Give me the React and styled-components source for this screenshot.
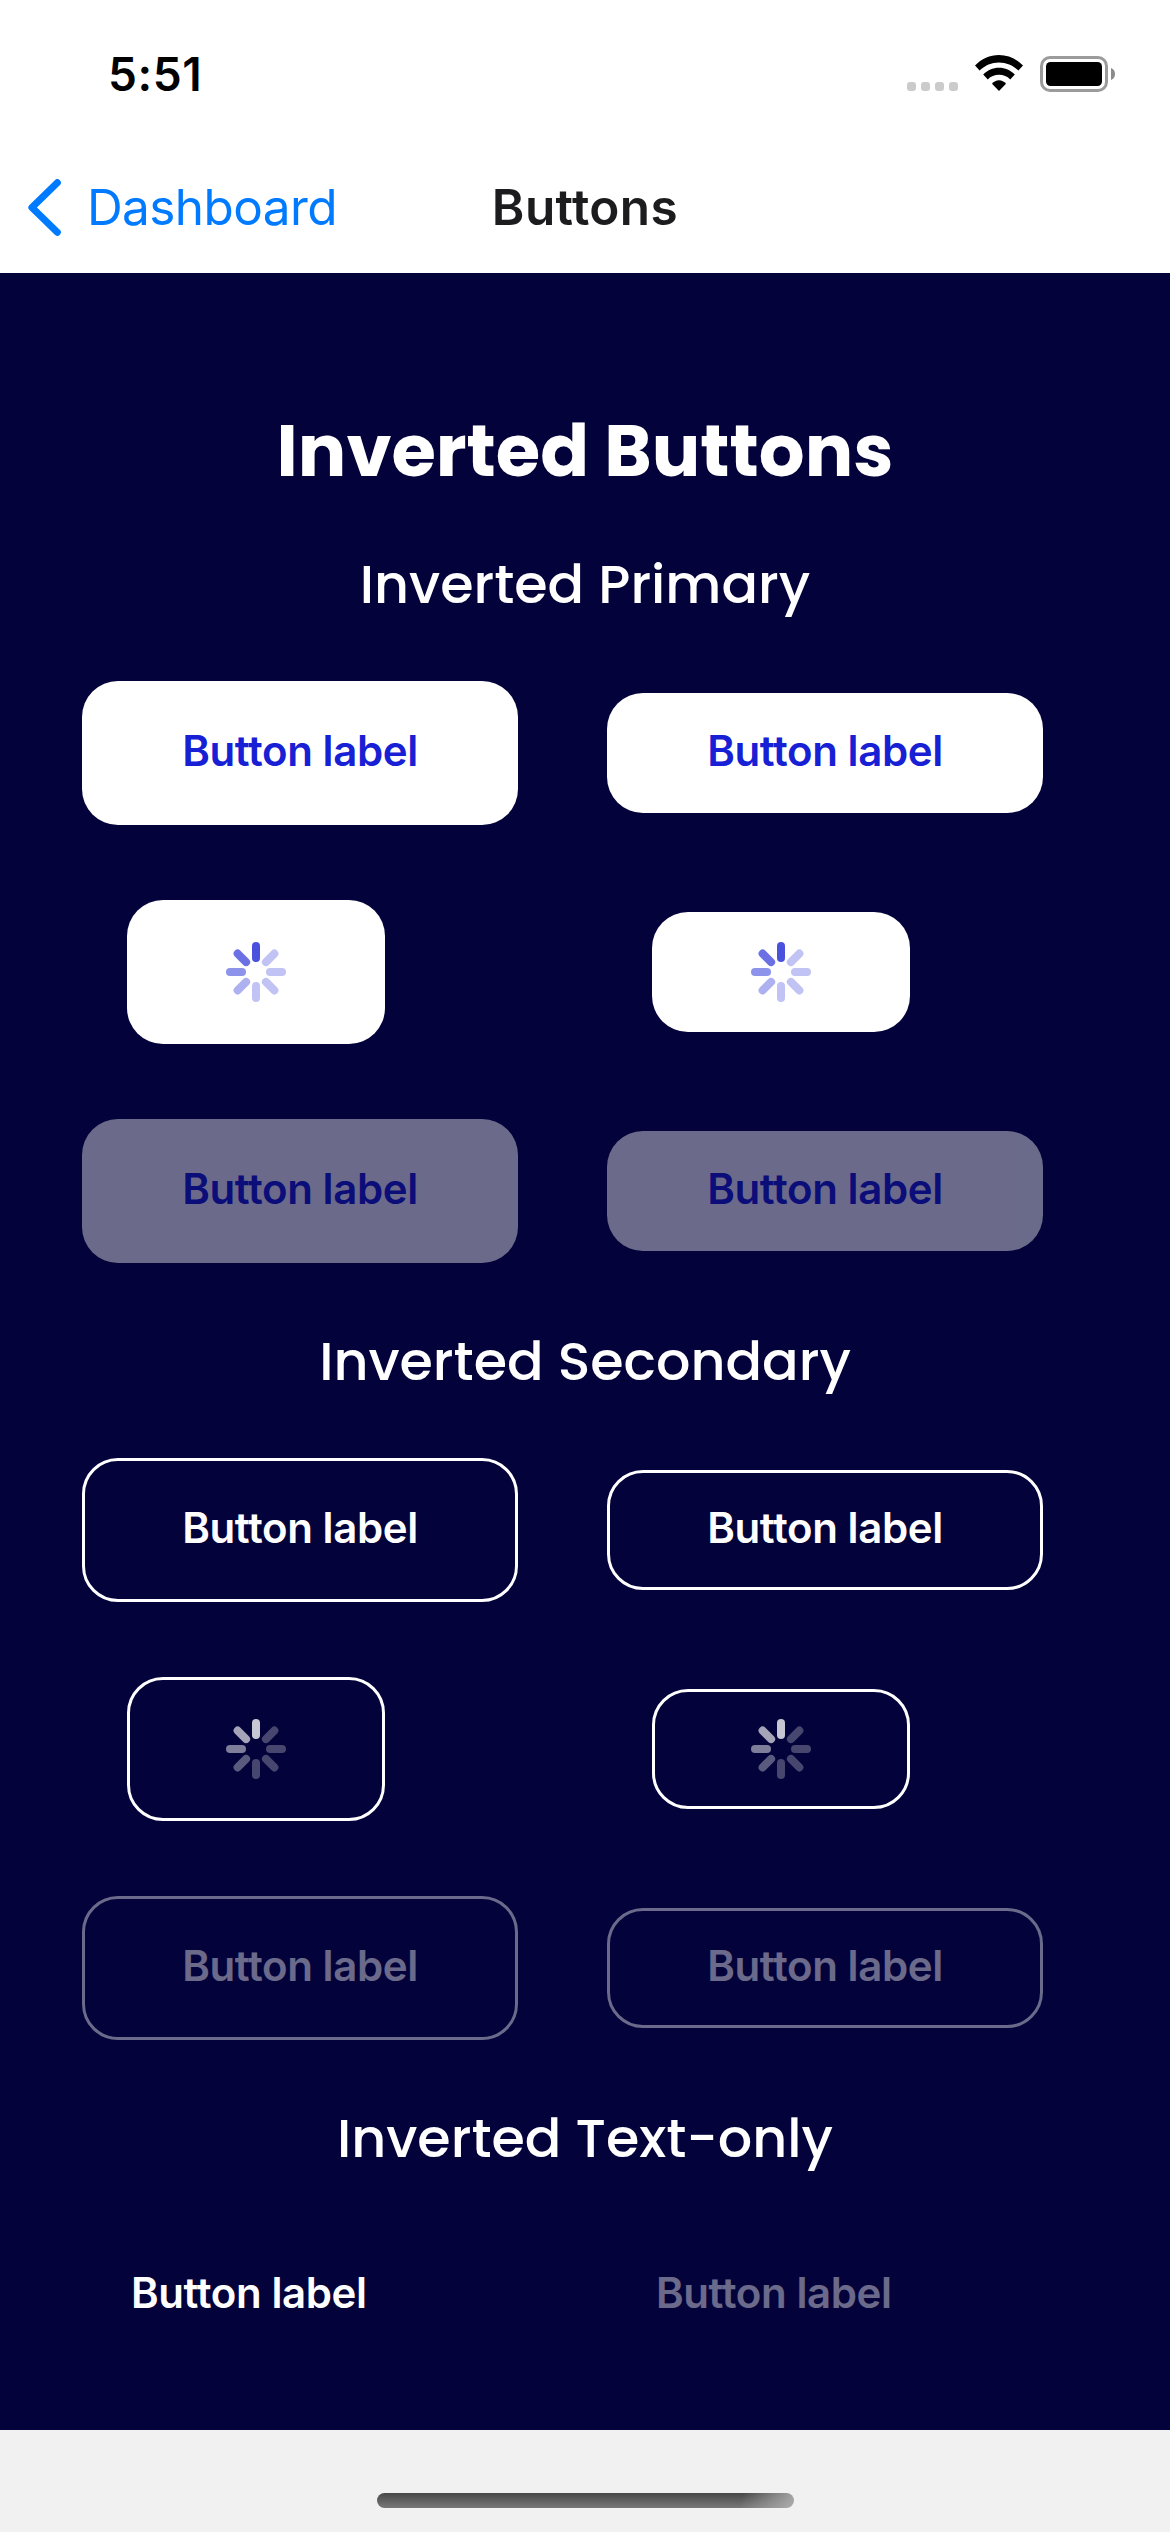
import React from "react";
import styled, { createGlobalStyle, css } from "styled-components";

const GlobalStyle = createGlobalStyle`
  *, *::before, *::after { box-sizing: border-box; }
  body { margin: 0; background: #f1f1f1; }
`;

const sans = `Inter, "Liberation Sans", sans-serif`;
const display = `Poppins, Inter, sans-serif`;

const Screen = styled.div`
  display: flex;
  flex-direction: column;
  width: 1170px;
  height: 2532px;
  overflow: hidden;
  background: #f1f1f1;
  font-family: ${sans};
`;

const StatusBar = styled.header`
  display: flex;
  justify-content: space-between;
  align-items: flex-start;
  height: 141px;
  padding: 55px 55px 0 108px;
  background: #fff;
`;

const Clock = styled.span`
  margin-top: -9px;
  font-size: 46px;
  font-weight: 600;
  line-height: 56px;
  letter-spacing: 0.6px;
  color: #000;
`;

const StatusIcons = styled.div`
  display: flex;
  align-items: flex-start;
`;

const SignalDots = styled.div`
  display: flex;
  gap: 5px;
  margin: 27px 17px 0 0;
`;

const SignalDot = styled.span`
  width: 9px;
  height: 9px;
  border-radius: 3px;
  background: #cbcbcb;
`;

const WifiSvg = styled.svg`
  display: block;
  width: 48px;
  height: 36px;
  margin-right: 17px;
`;

const BatterySvg = styled.svg`
  display: block;
  width: 75px;
  height: 36px;
  margin-top: 1px;
`;

const NavBar = styled.nav`
  display: grid;
  grid-template-columns: 1fr auto 1fr;
  align-items: center;
  height: 132px;
  padding: 0 28px;
  background: #fff;
  font-size: 49.5px;
  line-height: 60px;
`;

const BackLink = styled.a`
  display: flex;
  align-items: center;
  gap: 26px;
  color: #007aff;
  letter-spacing: -0.6px;
`;

const ChevronSvg = styled.svg`
  display: block;
  width: 33px;
  height: 57px;
`;

const NavTitle = styled.h1`
  margin: 0;
  font-size: inherit;
  font-weight: 600;
  letter-spacing: 0.4px;
  color: #1c1c1e;
`;

const Main = styled.main`
  display: flex;
  flex-direction: column;
  height: 2157px;
  padding-top: 124px;
  background: #03023a;
  color: #fff;
`;

const PageTitle = styled.h2`
  margin: 0 0 39px;
  font-family: ${display};
  font-size: 72px;
  font-weight: 700;
  line-height: 108px;
  text-align: center;
`;

const Section = styled.section`
  margin-bottom: 58px;
`;

const SectionTitle = styled.h3`
  margin: 0 0 56px;
  font-family: ${display};
  font-size: 54px;
  font-weight: 500;
  line-height: 81px;
  text-align: center;
`;

const Rows = styled.div`
  display: grid;
  grid-template-columns: 525px 525px;
  row-gap: 75px;
  align-items: center;
  justify-items: start;
  padding-left: 82px;
`;

const Button = styled.button`
  display: flex;
  align-items: center;
  justify-content: center;
  width: ${(p) => (p.$loading ? 258 : 436)}px;
  height: ${(p) => (p.$small ? 120 : 144)}px;
  margin: 0 0 0 ${(p) => (p.$loading ? 45 : 0)}px;
  padding: 0;
  border: 0;
  border-radius: 36px;
  font-family: ${sans};
  font-size: 42px;
  font-weight: 600;
  line-height: 52px;
  letter-spacing: -0.4px;
  opacity: ${(p) => (p.disabled ? 0.41 : 1)};
  ${(p) =>
    p.$variant === "primary" &&
    css`
      background: #fff;
      color: #1720d4;
    `}
  ${(p) =>
    p.$variant === "secondary" &&
    css`
      background: transparent;
      color: #fff;
      border: 3px solid #fff;
    `}
  ${(p) =>
    p.$variant === "text" &&
    css`
      width: auto;
      margin-left: 49px;
      background: transparent;
      color: #fff;
    `}
`;

const Label = styled.span`
  padding-bottom: 5px;
`;

const SpinnerSvg = styled.svg`
  display: block;
  width: 60px;
  height: 60px;
`;

const Footer = styled.footer`
  display: flex;
  justify-content: center;
  padding-top: 63px;
`;

const HomeIndicator = styled.div`
  width: 417px;
  height: 15px;
  border-radius: 8px;
  background:
    linear-gradient(105deg, rgba(178, 178, 178, 0) 87%, rgba(178, 178, 178, 0.9) 100%),
    linear-gradient(#484848, #787878);
`;

const spokes = [0.78, 0.27, 0.27, 0.27, 0.27, 0.35, 0.49, 0.64];

function Spinner() {
  return (
    <SpinnerSvg viewBox="0 0 60 60" fill="currentColor">
      {spokes.map((opacity, i) => (
        <rect
          key={i}
          x="26"
          y="0"
          width="8"
          height="20"
          rx="4"
          opacity={opacity}
          transform={`rotate(${i * 45} 30 30)`}
        />
      ))}
    </SpinnerSvg>
  );
}

function ActionButton({ variant, small, loading, disabled }) {
  return (
    <Button $variant={variant} $small={small} $loading={loading} disabled={disabled}>
      {loading ? <Spinner /> : <Label>Button label</Label>}
    </Button>
  );
}

function ButtonSection({ title, variant }) {
  return (
    <Section>
      <SectionTitle>{title}</SectionTitle>
      <Rows>
        <ActionButton variant={variant} />
        <ActionButton variant={variant} small />
        <ActionButton variant={variant} loading />
        <ActionButton variant={variant} loading small />
        <ActionButton variant={variant} disabled />
        <ActionButton variant={variant} disabled small />
      </Rows>
    </Section>
  );
}

export default function App() {
  return (
    <Screen>
      <GlobalStyle />
      <StatusBar>
        <Clock>5:51</Clock>
        <StatusIcons>
          <SignalDots>
            {[0, 1, 2, 3].map((i) => (
              <SignalDot key={i} />
            ))}
          </SignalDots>
          <WifiSvg viewBox="0 0 48 36">
            <path d="M24 0C15 0 6.3 3.7 0 10.6L4.6 15.6C9.8 10.4 16.7 7.5 24 7.5S38.2 10.4 43.4 15.6L48 10.6C41.7 3.7 33 0 24 0Z" />
            <path d="M24 12.7C18 12.7 12.3 15.2 8.2 19.6L12.8 24.4C15.7 21.4 19.7 19.8 24 19.8S32.3 21.4 35.2 24.4L39.8 19.6C35.7 15.2 30 12.7 24 12.7Z" />
            <path d="M24 25.2C21.3 25.2 18.8 26.5 17 28.8L24 36L31 28.8C29.2 26.5 26.7 25.2 24 25.2Z" />
          </WifiSvg>
          <BatterySvg viewBox="0 0 75 36">
            <rect x="1.5" y="1.5" width="65" height="33" rx="8.5" fill="none" stroke="#9b9b9b" strokeWidth="3" />
            <rect x="6" y="6" width="56" height="24" rx="4.5" />
            <path d="M71 12C73.6 13 75 15.3 75 18S73.6 23 71 24Z" fill="#8b8b8b" />
          </BatterySvg>
        </StatusIcons>
      </StatusBar>
      <NavBar>
        <BackLink>
          <ChevronSvg viewBox="0 0 33 57" fill="none" stroke="currentColor" strokeWidth="7" strokeLinecap="round" strokeLinejoin="round">
            <path d="M29.3 3.7L3.9 28.5L29.3 53.3" />
          </ChevronSvg>
          Dashboard
        </BackLink>
        <NavTitle>Buttons</NavTitle>
      </NavBar>
      <Main>
        <PageTitle>Inverted Buttons</PageTitle>
        <ButtonSection title="Inverted Primary" variant="primary" />
        <ButtonSection title="Inverted Secondary" variant="secondary" />
        <Section>
          <SectionTitle>Inverted Text-only</SectionTitle>
          <Rows>
            <ActionButton variant="text" small />
            <ActionButton variant="text" small disabled />
          </Rows>
        </Section>
      </Main>
      <Footer>
        <HomeIndicator />
      </Footer>
    </Screen>
  );
}
